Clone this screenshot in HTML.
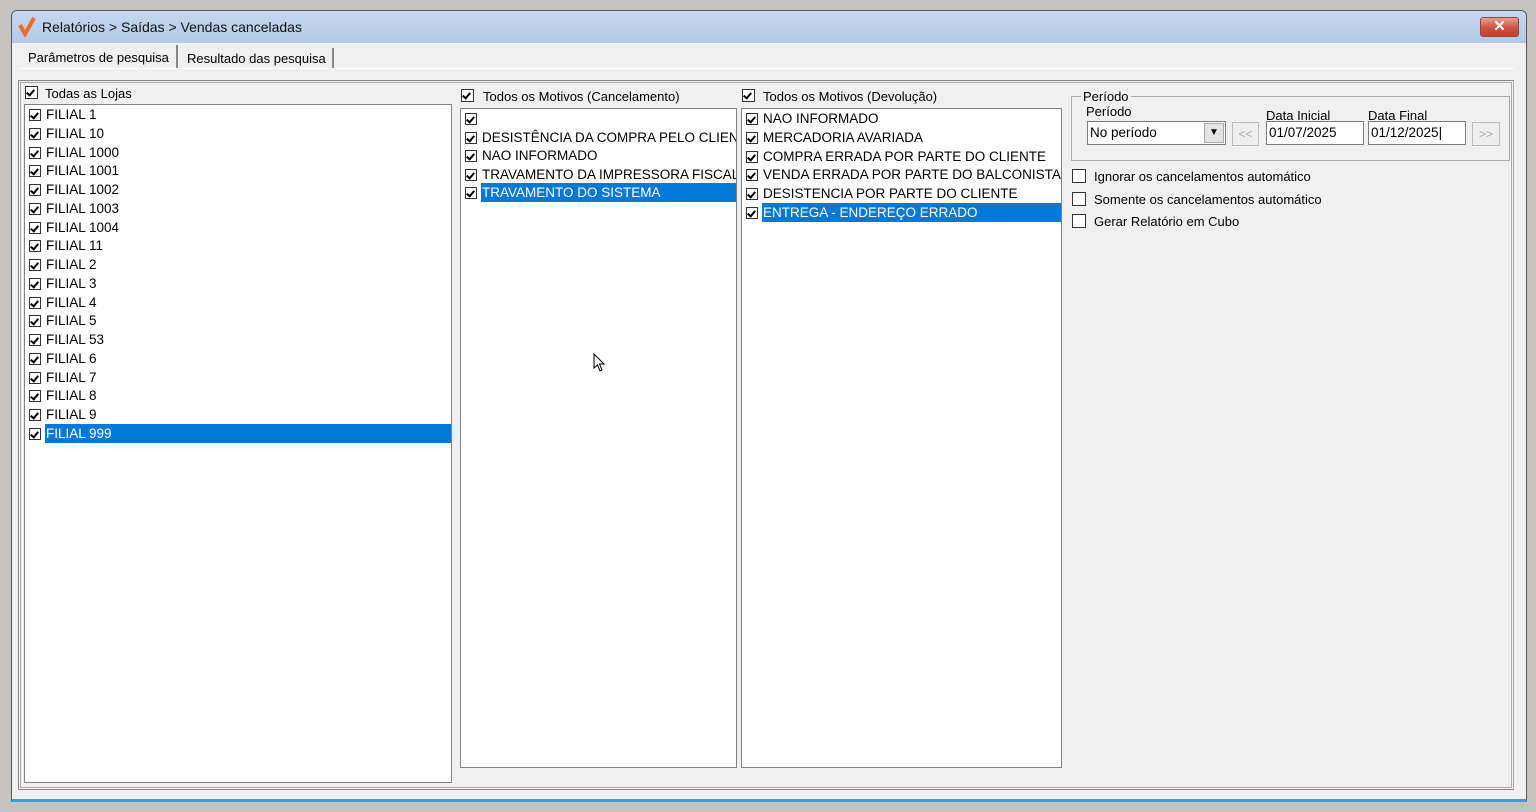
<!DOCTYPE html>
<html><head><meta charset="utf-8"><style>
*{margin:0;padding:0;box-sizing:border-box}
body{width:1536px;height:812px;background:#c6c2c2;position:relative;overflow:hidden;font-family:"Liberation Sans",sans-serif;font-size:13px;color:#000}
.a{position:absolute}
.win{left:11px;top:10px;width:1516px;height:792px;background:#f0f0f0;border:1px solid #555;border-radius:6px 6px 0 0;border-bottom:3px solid #29a8d8}
.title{left:12px;top:11px;width:1514px;height:32px;background:linear-gradient(#c6d8ee,#b2c9e6);border-radius:5px 5px 0 0}
.list{background:#fff;border:1px solid #828282}
.row{position:absolute;left:0;height:19px;line-height:19px;white-space:nowrap;overflow:hidden;font-size:13.5px}
.cb{position:absolute;width:12px;height:12px;border:1px solid #333;background:#fff}
.cb::after{content:"";position:absolute;left:2px;top:1px;width:3px;height:6px;border:solid #000;border-width:0 2px 2px 0;transform:rotate(40deg)}
.sel{background:#0078d7;color:#fff}
.lbl{position:absolute;white-space:nowrap}
.box{position:absolute;width:14px;height:14px;border:1px solid #333;background:#fff}
.inp{position:absolute;background:#fff;border:1px solid #7a7a7a;height:24px;line-height:22px;padding-left:2px;font-size:13.5px}
</style></head><body>
<div class="a win"></div>
<div class="a title"></div>
<svg class="a" style="left:18px;top:17px" width="18" height="20"><path d="M2 8 L7 17 L16 1" stroke="#f06a28" stroke-width="4" fill="none"/></svg>
<div class="lbl" style="left:42px;top:19px;color:#111;font-size:14px">Relatórios &gt; Saídas &gt; Vendas canceladas</div>
<div class="a" style="left:1480px;top:17px;width:39px;height:20px;border:1px solid #8a4a40;border-radius:3px;background:linear-gradient(#e8a090,#d05040 55%,#c84030);color:#fff;text-align:center;font-weight:bold;line-height:18px;font-size:15px">✕</div>
<div class="a" style="left:20px;top:68px;width:1494px;height:1px;background:#fff"></div>
<div class="lbl" style="left:28px;top:50px">Parâmetros de pesquisa</div>
<div class="a" style="left:176px;top:45px;width:2px;height:23px;background:#888"></div>
<div class="lbl" style="left:187px;top:51px">Resultado das pesquisa</div>
<div class="a" style="left:332px;top:48px;width:2px;height:20px;background:#888"></div>
<div class="a" style="left:18px;top:80px;width:1496px;height:710px;border:1px solid #888;border-right-color:#aaa"></div>
<div class="a" style="left:20px;top:82px;width:1492px;height:706px;border:1px solid #aaa"></div>
<div class="cb" style="left:25px;top:86px;width:13px;height:13px"></div>
<div class="lbl" style="left:45px;top:86px">Todas as Lojas</div>
<div class="a list" style="left:24px;top:104px;width:428px;height:679px" id="L"></div>
<div class="cb" style="left:461px;top:89px;width:13px;height:13px"></div>
<div class="lbl" style="left:483px;top:89px">Todos os Motivos (Cancelamento)</div>
<div class="a list" style="left:460px;top:108px;width:277px;height:660px;overflow:hidden" id="M"></div>
<div class="cb" style="left:742px;top:89px;width:13px;height:13px"></div>
<div class="lbl" style="left:763px;top:89px">Todos os Motivos (Devolução)</div>
<div class="a list" style="left:741px;top:108px;width:321px;height:660px;overflow:hidden" id="R"></div>
<div class="a" style="left:1071px;top:96px;width:439px;height:65px;border:1px solid #aaa"></div>
<div class="lbl" style="left:1081px;top:89px;background:#f0f0f0;padding:0 2px">Período</div>
<div class="lbl" style="left:1086px;top:104px">Período</div>
<div class="inp" style="left:1087px;top:121px;width:139px">No período</div>
<div class="a" style="left:1204px;top:123px;width:20px;height:20px;background:#e4e4e4;border:1px solid #aaa;font-size:10px;text-align:center;line-height:18px">▼</div>
<div class="a" style="left:1232px;top:122px;width:27px;height:24px;background:#eee;border:1px solid #bbb;color:#aaa;font-size:12px;text-align:center;line-height:22px">&lt;&lt;</div>
<div class="lbl" style="left:1266px;top:108px">Data Inicial</div>
<div class="inp" style="left:1266px;top:121px;width:98px">01/07/2025</div>
<div class="lbl" style="left:1368px;top:108px">Data Final</div>
<div class="inp" style="left:1368px;top:121px;width:98px">01/12/2025|</div>
<div class="a" style="left:1472px;top:122px;width:28px;height:24px;background:#eee;border:1px solid #bbb;color:#aaa;font-size:12px;text-align:center;line-height:22px">&gt;&gt;</div>
<div class="box" style="left:1072px;top:169px"></div><div class="lbl" style="left:1094px;top:169px">Ignorar os cancelamentos automático</div>
<div class="box" style="left:1072px;top:192px"></div><div class="lbl" style="left:1094px;top:192px">Somente os cancelamentos automático</div>
<div class="box" style="left:1072px;top:214px"></div><div class="lbl" style="left:1094px;top:214px">Gerar Relatório em Cubo</div>
<svg class="a" style="left:593px;top:353px" width="14" height="20"><path d="M1 1 L1 15 L4.5 12 L7 18 L9 17 L6.5 11 L11 11 Z" fill="#fff" stroke="#000"/></svg>
<script>
function fill(id,items,sel,top,w,st){var e=document.getElementById(id),h='';items.forEach(function(t,i){var s=i==sel,y=Math.round(top+i*st);h+='<div class="cb" style="left:4px;top:'+(y+4)+'px"></div><div class="row'+(s?' sel':'')+'" style="left:20px;top:'+y+'px;width:'+w+'px;padding-left:1px">'+t+'</div>'});e.innerHTML=h;}
var L=['FILIAL 1','FILIAL 10','FILIAL 1000','FILIAL 1001','FILIAL 1002','FILIAL 1003','FILIAL 1004','FILIAL 11','FILIAL 2','FILIAL 3','FILIAL 4','FILIAL 5','FILIAL 53','FILIAL 6','FILIAL 7','FILIAL 8','FILIAL 9','FILIAL 999'];
fill('L',L,17,0,406,18.76);
fill('M',['','DESISTÊNCIA DA COMPRA PELO CLIENTE','NAO INFORMADO','TRAVAMENTO DA IMPRESSORA FISCAL','TRAVAMENTO DO SISTEMA'],4,0,256,18.6);
fill('R',['NAO INFORMADO','MERCADORIA AVARIADA','COMPRA ERRADA POR PARTE DO CLIENTE','VENDA ERRADA POR PARTE DO BALCONISTA','DESISTENCIA POR PARTE DO CLIENTE','ENTREGA - ENDEREÇO ERRADO'],5,0,300,18.8);
</script>
</body></html>
